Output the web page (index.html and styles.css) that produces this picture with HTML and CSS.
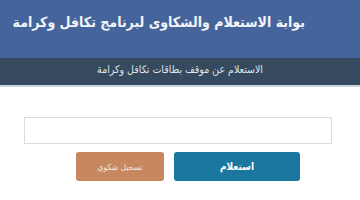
FILE: index.html
```html
<!DOCTYPE html>
<html lang="ar" dir="rtl">
<head>
<meta charset="utf-8">
<link rel="stylesheet" href="styles.css">
</head>
<body>
<header class="top">
  <h1 class="title">بوابة الاستعلام والشكاوى لبرنامج تكافل وكرامة</h1>
</header>
<div class="band">الاستعلام عن موقف بطاقات تكافل وكرامة</div>
<main class="form">
  <div class="field"></div>
  <div class="actions">
    <button class="btn btn-query">استعلام</button>
    <button class="btn btn-complaint">تسجيل شكوي</button>
  </div>
</main>
</body>
</html>
```
FILE: styles.css
```css
* { box-sizing: border-box; }
html, body { margin: 0; padding: 0; }
body {
  width: 360px;
  height: 200px;
  overflow: hidden;
  background: #fff;
  font-family: "DejaVu Sans Condensed", "DejaVu Sans", sans-serif;
}
.top {
  height: 58px;
  background: #45649c;
  padding: 8px 55px 0 0;
}
.title {
  margin: 0;
  color: #f2f4f8;
  font-size: 14px;
  font-weight: bold;
  line-height: 29px;
  white-space: nowrap;
}
.band {
  height: 29px;
  background: #364a5f;
  border-bottom: 2px solid #c9d6e4;
  color: #dfe4ea;
  font-size: 10.5px;
  text-align: center;
  line-height: 23px;
  white-space: nowrap;
}
.form {
  padding: 30px 28px 0 24px;
}
.field {
  height: 27px;
  border: 1px solid #dcdcdc;
}
.actions {
  display: flex;
  gap: 10px;
  margin-top: 8px;
  padding-right: 32px;
}
.btn {
  height: 29px;
  border: none;
  border-radius: 3px;
  color: #fff;
  font-family: "DejaVu Sans Condensed", "DejaVu Sans", sans-serif;
  font-weight: bold;
  padding: 0;
}
.btn-query {
  width: 126px;
  background: #1b77a0;
  font-size: 10px;
}
.btn-complaint {
  width: 88px;
  background: #c7875f;
  font-size: 8.5px;
  font-weight: normal;
  color: #f4e8df;
}
```
